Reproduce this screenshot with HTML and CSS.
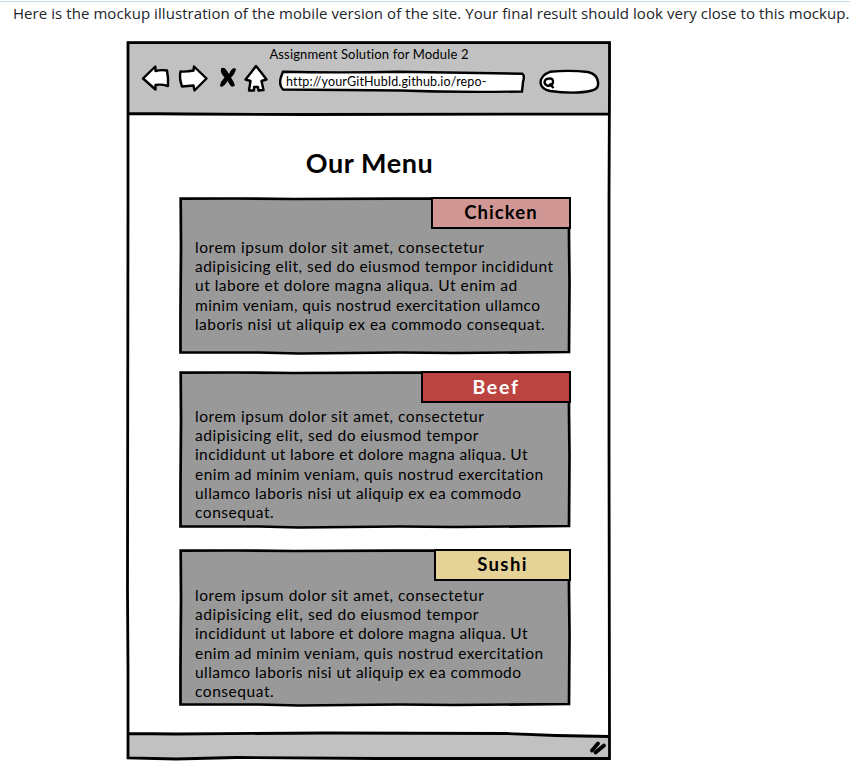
FILE: index.html
```html
<!DOCTYPE html>
<html lang="en">
<head>
<meta charset="utf-8">
<title>Assignment Solution for Module 2</title>
<link rel="stylesheet" href="styles.css">
</head>
<body>
<p class="intro">Here is the mockup illustration of the mobile version of the site. Your final result should look very close to this mockup.</p>
<main class="browser">
  <header class="chrome">
    <div class="title">Assignment Solution for Module 2</div>
    <div class="toolbar">
      <svg class="nav" width="130" height="32" viewBox="0 0 130 32">
        <g fill="#fff" stroke="#000" stroke-width="2.4" stroke-linejoin="round" stroke-linecap="round">
          <path d="M3 14.500 L15.3 2.500 L15.500 7 Q21 5.500 27 6.500 Q28.500 14 28 22 Q21 20 15.500 21 L15.500 25.500 Z"/>
          <path d="M40.5 7.500 Q47 8 53.5 6.500 L54 2.500 L66.5 14.500 L54.5 26.500 L53.5 21.500 L42 22.500 Q39 14 40.5 7.500 Z"/>
          <path d="M116 2 Q121 8 126.500 15.500 L121.5 17 L123.500 26 L118.5 26.500 L118 23 L114 23 L114 26.5 L109 26.500 L110.5 17 L105.500 15.500 Q111 9 116 2 Z"/>
        </g>
        <path d="M81 4.500 Q84 2.500 86 5.500 L89 10 Q91 5 94 4 L96 5 Q95 10 91 13.500 Q94 18 95 21.500 Q92 24 90 21 L87.500 17 Q85 22 81 23 L80 21.500 Q80.500 17.500 84.500 13.500 Q80 9 81 4.500 Z"/>
      </svg>
      <div class="address">
        <svg class="frame" viewBox="0 0 246 23"><path d="M4 1.7 Q60 3 120 1.700 L243 3.700 Q246 5 244 12 L243 21.500 Q180 22.500 122 20.500 L4 19.500 Q-.5 15 2 7 Z" fill="#fff" stroke="#000" stroke-width="2.400"/></svg>
        <span class="url">http://yourGitHubId.github.io/repo-</span>
      </div>
      <svg class="search" width="61" height="26" viewBox="0 0 61 26">
        <path d="M11 2.800 Q30 .8 49 3 Q58 5 59 13 Q60 20 53 21.500 Q37 25.500 11 22 Q2 20 1.500 13.500 Q2 6 11 2.800 Z" fill="#fff" stroke="#000" stroke-width="2.400"/>
        <path d="M9 9.700 Q14.500 8.500 14 13.500 Q13 17.500 8 16.500 Q4.500 14.500 6 11.500 Q7 9.700 9 9.700 Z M10.500 14.500 L14.500 19" fill="none" stroke="#000" stroke-width="2.400"/>
      </svg>
    </div>
  </header>
  <section class="content">
    <h1>Our Menu</h1>
    <article class="card first">
      <svg class="frame" viewBox="0 0 392 158"><path d="M1.700 1.700 L55 1.500 L115 2 L215 1.700 L390 1.500 L390 40 L390.500 85 L390 155 L275 156 L220 155.500 L120 156.500 L80 155.500 L1.500 155.500 L1.500 115 L2 50 Z"/></svg>
      <h2 class="tag chicken">Chicken</h2>
      <p><span class="l1">lorem ipsum dolor sit amet, consectetur</span><span class="l2">adipisicing elit, sed do eiusmod tempor incididunt</span><span class="l3">ut labore et dolore magna aliqua. Ut enim ad</span><span class="l4">minim veniam, quis nostrud exercitation ullamco</span><span class="l5">laboris nisi ut aliquip ex ea commodo consequat.</span></p>
    </article>
    <article class="card second">
      <svg class="frame" viewBox="0 0 392 158"><path d="M1.700 1.700 L55 1.500 L115 2 L215 1.700 L390 1.500 L390 40 L390.500 85 L390 155 L275 156 L220 155.500 L120 156.500 L80 155.500 L1.500 155.500 L1.500 115 L2 50 Z"/></svg>
      <h2 class="tag beef">Beef</h2>
      <p><span class="l1">lorem ipsum dolor sit amet, consectetur</span><span class="m2">adipisicing elit, sed do eiusmod tempor</span><span class="m3">incididunt ut labore et dolore magna aliqua. Ut</span><span class="m4">enim ad minim veniam, quis nostrud exercitation</span><span class="m5">ullamco laboris nisi ut aliquip ex ea commodo</span><span class="m6">consequat.</span></p>
    </article>
    <article class="card third">
      <svg class="frame" viewBox="0 0 392 158"><path d="M1.700 1.700 L55 1.500 L115 2 L215 1.700 L390 1.500 L390 40 L390.500 85 L390 155 L275 156 L220 155.500 L120 156.500 L80 155.500 L1.500 155.500 L1.500 115 L2 50 Z"/></svg>
      <h2 class="tag sushi">Sushi</h2>
      <p><span class="l1">lorem ipsum dolor sit amet, consectetur</span><span class="m2">adipisicing elit, sed do eiusmod tempor</span><span class="m3">incididunt ut labore et dolore magna aliqua. Ut</span><span class="m4">enim ad minim veniam, quis nostrud exercitation</span><span class="m5">ullamco laboris nisi ut aliquip ex ea commodo</span><span class="m6">consequat.</span></p>
    </article>
  </section>
  <svg class="outline" viewBox="0 0 485 721">
    <path d="M2 692.500 L50 693 L200 692 L380 692.500 L430 694.500 L483 695.500 L483 717.500 L250 717.500 L110 716.500 L50 718 L2 717 Z" fill="#c1c1c1"/>
    <path d="M2 1.700 L483.500 1.700 L483.500 40 L483 160 L483 400 L483.500 695 L483.500 717.500 L250 717.500 L110 716.500 L50 718 L2 717 L2 630 L1.500 550 L2 160 Z M2 72.500 L60 73 L180 73.500 L483 73 M2 692.500 L50 693 L200 692 L380 692.500 L430 694.500 L483 695.500" fill="none" stroke="#000" stroke-width="2.800"/>
    <path d="M466 709.500 L472 702.500 M469.500 711.500 L478 704.500" stroke="#000" stroke-width="3.800" stroke-linecap="round"/>
  </svg>
</main>
</body>
</html>
```

FILE: styles.css
```css
* { box-sizing: border-box; }
body {
  margin: 0;
  width: 850px;
  height: 762px;
  overflow: hidden;
  background: #fff;
  color: #000;
  border-top: 1px solid #fbfdfe;
  font-family: Lato, sans-serif;
  font-variant-ligatures: none;
}
.intro {
  margin: 0;
  height: 40px;
  padding-left: 13px;
  border-top: 1px solid #cdd9e0;
  font: 15px/22px "Open Sans", sans-serif;
  letter-spacing: 0.065px;
  white-space: nowrap;
  color: #212529;
}
.browser {
  position: relative;
  width: 485px;
  height: 721px;
  margin-left: 126px;
}
.chrome {
  height: 73px;
  background: #c1c1c1;
  margin-left: 1px;
  padding-top: 4px;
}
.title {
  font-size: 13px;
  line-height: 18px;
  letter-spacing: 0.15px;
  text-align: center;
  white-space: nowrap;
}
.toolbar {
  display: flex;
  align-items: flex-start;
  padding: 1px 0 0 12.500px;
}
.nav { flex: none; }
.address {
  position: relative;
  flex: none;
  width: 246px;
  height: 23px;
  margin: 6px 0 0 9.500px;
}
.url {
  position: relative;
  display: block;
  padding-left: 7px;
  font-size: 12.500px;
  line-height: 23px;
  letter-spacing: 0.15px;
  white-space: nowrap;
}
.search { flex: none; margin: 5px 0 0 13.500px; }
.frame { position: absolute; inset: 0; width: 100%; height: 100%; }
.content { padding: 33px 0 0 53px; }
h1 {
  width: 381px;
  margin: 0;
  height: 50px;
  font-size: 27px;
  line-height: 32px;
  letter-spacing: 0.6px;
  text-align: center;
}
.card {
  position: relative;
  display: flex;
  flex-direction: column;
  align-items: flex-end;
  width: 392px;
  height: 158px;
}
.card .frame path { fill: #999; stroke: #000; stroke-width: 2.700; }
.second { margin-top: 16px; }
.third { margin-top: 20px; }
.tag {
  position: relative;
  height: 32px;
  margin: 0;
  border: 2px solid #000;
  font-size: 18.500px;
  line-height: 27px;
  text-align: center;
}
.chicken { width: 140px; background: #d19795; letter-spacing: 1.100px; }
.beef { width: 150px; background: #bb4441; color: #fff; font-size: 19.500px; letter-spacing: 1.700px; }
.sushi { width: 137px; background: #e4d296; letter-spacing: 1.400px; }
.card p {
  position: relative;
  width: 376px;
  margin: 9px 0 0;
  font-size: 15.500px;
  line-height: 19.200px;
  white-space: nowrap;
}
.second p { margin-top: 4px; }
.third p { margin-top: 5px; }
p span { display: block; width: max-content; }
.l1 { letter-spacing: 0.540px; }
.l2 { letter-spacing: 0.485px; }
.l3 { letter-spacing: 0.505px; }
.l4 { letter-spacing: 0.410px; }
.l5 { letter-spacing: 0.465px; }
.m2 { letter-spacing: 0.530px; }
.m3 { letter-spacing: 0.400px; }
.m4 { letter-spacing: 0.450px; }
.m5 { letter-spacing: 0.445px; }
.m6 { letter-spacing: 0.550px; }
.outline { position: absolute; inset: 0; width: 485px; height: 721px; pointer-events: none; }
```
